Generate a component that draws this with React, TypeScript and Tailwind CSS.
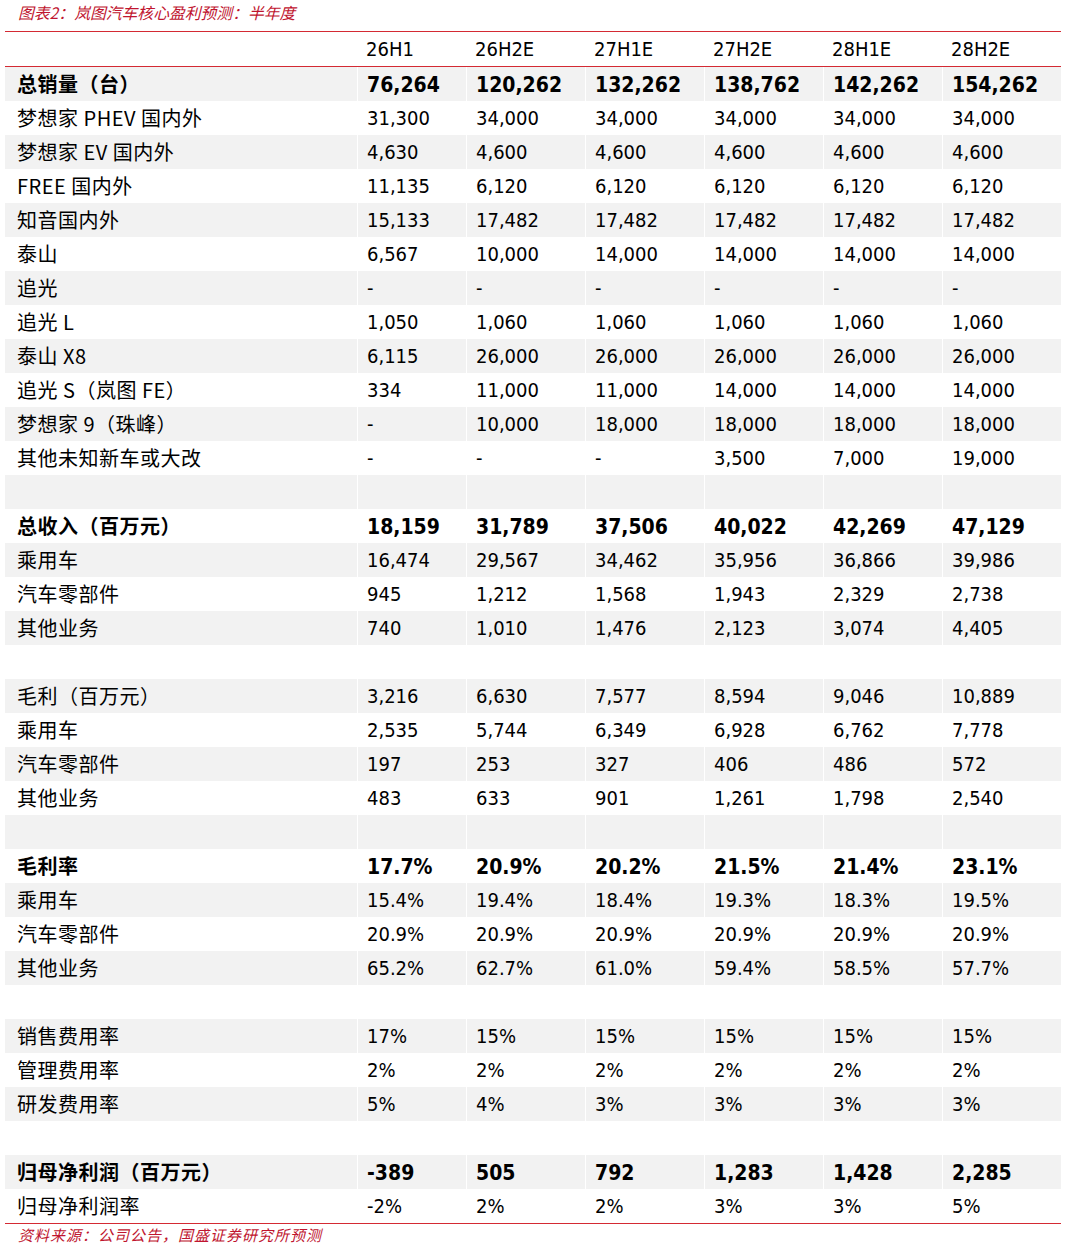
import React from "react";

interface Row {
  label: string;
  values: string[];
  bold?: boolean;
}

const periods = ["26H1", "26H2E", "27H1E", "27H2E", "28H1E", "28H2E"];

const blank: Row = { label: "", values: ["", "", "", "", "", ""] };

const rows: Row[] = [
  { label: "总销量（台）", values: ["76,264", "120,262", "132,262", "138,762", "142,262", "154,262"], bold: true },
  { label: "梦想家 PHEV 国内外", values: ["31,300", "34,000", "34,000", "34,000", "34,000", "34,000"] },
  { label: "梦想家 EV 国内外", values: ["4,630", "4,600", "4,600", "4,600", "4,600", "4,600"] },
  { label: "FREE 国内外", values: ["11,135", "6,120", "6,120", "6,120", "6,120", "6,120"] },
  { label: "知音国内外", values: ["15,133", "17,482", "17,482", "17,482", "17,482", "17,482"] },
  { label: "泰山", values: ["6,567", "10,000", "14,000", "14,000", "14,000", "14,000"] },
  { label: "追光", values: ["-", "-", "-", "-", "-", "-"] },
  { label: "追光 L", values: ["1,050", "1,060", "1,060", "1,060", "1,060", "1,060"] },
  { label: "泰山 X8", values: ["6,115", "26,000", "26,000", "26,000", "26,000", "26,000"] },
  { label: "追光 S（岚图 FE）", values: ["334", "11,000", "11,000", "14,000", "14,000", "14,000"] },
  { label: "梦想家 9（珠峰）", values: ["-", "10,000", "18,000", "18,000", "18,000", "18,000"] },
  { label: "其他未知新车或大改", values: ["-", "-", "-", "3,500", "7,000", "19,000"] },
  blank,
  { label: "总收入（百万元）", values: ["18,159", "31,789", "37,506", "40,022", "42,269", "47,129"], bold: true },
  { label: "乘用车", values: ["16,474", "29,567", "34,462", "35,956", "36,866", "39,986"] },
  { label: "汽车零部件", values: ["945", "1,212", "1,568", "1,943", "2,329", "2,738"] },
  { label: "其他业务", values: ["740", "1,010", "1,476", "2,123", "3,074", "4,405"] },
  blank,
  { label: "毛利（百万元）", values: ["3,216", "6,630", "7,577", "8,594", "9,046", "10,889"] },
  { label: "乘用车", values: ["2,535", "5,744", "6,349", "6,928", "6,762", "7,778"] },
  { label: "汽车零部件", values: ["197", "253", "327", "406", "486", "572"] },
  { label: "其他业务", values: ["483", "633", "901", "1,261", "1,798", "2,540"] },
  blank,
  { label: "毛利率", values: ["17.7%", "20.9%", "20.2%", "21.5%", "21.4%", "23.1%"], bold: true },
  { label: "乘用车", values: ["15.4%", "19.4%", "18.4%", "19.3%", "18.3%", "19.5%"] },
  { label: "汽车零部件", values: ["20.9%", "20.9%", "20.9%", "20.9%", "20.9%", "20.9%"] },
  { label: "其他业务", values: ["65.2%", "62.7%", "61.0%", "59.4%", "58.5%", "57.7%"] },
  blank,
  { label: "销售费用率", values: ["17%", "15%", "15%", "15%", "15%", "15%"] },
  { label: "管理费用率", values: ["2%", "2%", "2%", "2%", "2%", "2%"] },
  { label: "研发费用率", values: ["5%", "4%", "3%", "3%", "3%", "3%"] },
  blank,
  { label: "归母净利润（百万元）", values: ["-389", "505", "792", "1,283", "1,428", "2,285"], bold: true },
  { label: "归母净利润率", values: ["-2%", "2%", "2%", "3%", "3%", "5%"] },
];

// first data column is a bit narrower than the rest
const colWidths = ["w-[109px]", "w-[119px]", "w-[119px]", "w-[119px]", "w-[119px]", "w-[119px]"];

export default function App() {
  return (
    <main className="w-[1066px] h-[1248px] bg-white text-black">
      {/* Title */}
      <div className="h-[31px] pl-[18px] pt-[4px]">
        <p className="text-[15.8px] leading-[18px] italic text-[#c0152f] font-['Noto_Sans_CJK_SC',sans-serif]">
          图表2：岚图汽车核心盈利预测：半年度
        </p>
      </div>

      {/* Table */}
      <div className="mx-[5px] w-[1056px] border-t border-b border-[#d42a33]">
        {/* Header */}
        <div className="flex h-[35px] items-center border-b border-[#d42a33] font-['DejaVu_Sans_Condensed','DejaVu_Sans',sans-serif] [font-stretch:condensed] text-[20px]">
          <div className="w-[352px]" />
          {periods.map((p, i) => (
            <div key={p} className={`${colWidths[i]} pl-[9px]`}>
              {p}
            </div>
          ))}
        </div>

        {rows.map((row, idx) => (
          <div
            key={idx}
            className={`flex h-[34px] items-center ${idx % 2 === 0 ? "bg-[#f2f2f2]" : "bg-white"}`}
          >
            <div
              className={`w-[352px] h-full flex items-center pl-[12px] text-[20px] tracking-[0.5px] font-['Noto_Sans_CJK_SC',sans-serif] ${
                row.bold ? "font-bold" : "font-normal"
              }`}
            >
              {row.label}
            </div>
            {row.values.map((v, i) => (
              <div
                key={i}
                className={`${colWidths[i]} h-full flex items-center pl-[9px] border-l border-white font-['DejaVu_Sans_Condensed','DejaVu_Sans',sans-serif] [font-stretch:condensed] ${
                  row.bold ? "font-bold text-[21px] pt-[3px]" : "text-[20px]"
                }`}
              >
                {v}
              </div>
            ))}
          </div>
        ))}
      </div>

      {/* Source */}
      <div className="pl-[18px] pt-[2px]">
        <p className="text-[15px] leading-[18px] italic tracking-[1px] text-[#c0152f] font-['Noto_Sans_CJK_SC',sans-serif]">
          资料来源：公司公告，国盛证券研究所预测
        </p>
      </div>
    </main>
  );
}
